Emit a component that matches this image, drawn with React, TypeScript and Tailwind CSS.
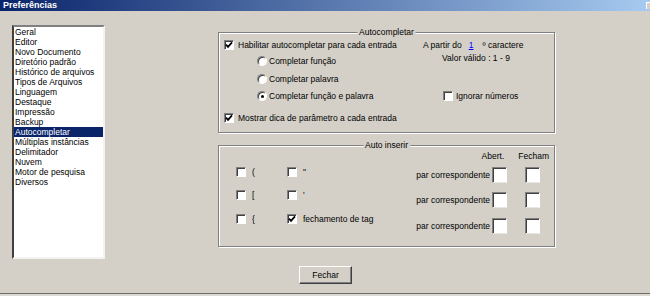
import type { ReactNode } from "react";

const items = [
  "Geral",
  "Editor",
  "Novo Documento",
  "Diretório padrão",
  "Histórico de arquivos",
  "Tipos de Arquivos",
  "Linguagem",
  "Destaque",
  "Impressão",
  "Backup",
  "Autocompletar",
  "Múltiplas instâncias",
  "Delimitador",
  "Nuvem",
  "Motor de pesquisa",
  "Diversos",
];

const Check = ({ checked = false }: { checked?: boolean }) => (
  <span className="w-[10px] h-[10px] shrink-0 bg-white border border-t-[#808080] border-l-[#808080] border-r-white border-b-white shadow-[inset_1px_1px_0_#404040] flex items-center justify-center">
    {checked && (
      <svg width="8" height="8" viewBox="0 0 8 8">
        <path d="M1 3.6 L3 5.8 L7 1.4" stroke="#000" strokeWidth="1.8" fill="none" />
      </svg>
    )}
  </span>
);

const Radio = ({ checked = false }: { checked?: boolean }) => (
  <span className="w-[10px] h-[10px] shrink-0 rounded-full bg-white border border-t-[#808080] border-l-[#808080] border-r-white border-b-white shadow-[inset_1px_1px_0_#404040] flex items-center justify-center">
    {checked && <span className="w-[3px] h-[3px] rounded-full bg-black" />}
  </span>
);

const Field = ({ className = "" }: { className?: string }) => (
  <span
    className={`w-[15px] h-[16px] bg-white border border-t-[#808080] border-l-[#808080] border-r-white border-b-[#e8e6e0] shadow-[inset_1px_1px_0_#404040] ${className}`}
  />
);

const GroupBox = ({
  title,
  className = "",
  children,
}: {
  title: string;
  className?: string;
  children: ReactNode;
}) => (
  <div
    className={`relative border border-[#808080] shadow-[inset_1px_1px_0_#fff,1px_1px_0_#fff] ${className}`}
  >
    <span className="absolute -top-[6px] left-1/2 -translate-x-1/2 bg-[#d4d0c8] px-[2px] leading-[10px]">
      {title}
    </span>
    {children}
  </div>
);

export default function App() {
  return (
    <div className="w-[650px] h-[296px] bg-[#d4d0c8] flex flex-col font-['Liberation_Sans',Arial,sans-serif] text-[8.5px] leading-[10px] text-black overflow-hidden">
      {/* title bar */}
      <div className="h-[11px] shrink-0 bg-[linear-gradient(to_right,#0a246a,#a6caf0)] flex items-center justify-between pl-[3px]">
        <span className="text-white font-bold text-[9px] leading-[11px]">Preferências</span>
        <span className="w-[4px] h-[7px] bg-[#d4d0c8] border-l border-t border-white" />
      </div>

      <div className="flex flex-1">
        {/* category list */}
        <div className="ml-[12px] mt-[14px] w-[93px] h-[234px] bg-white border-2 border-t-[#808080] border-l-[#404040] border-r-[#f4f3ef] border-b-[#f4f3ef] flex flex-col">
          {items.map((it) => (
            <div
              key={it}
              className={`h-[10px] pl-[1px] whitespace-nowrap ${
                it === "Autocompletar" ? "bg-[#0a246a] text-white" : ""
              }`}
            >
              {it}
            </div>
          ))}
        </div>

        {/* settings */}
        <div className="ml-[113px] w-[337px] mt-[21px] flex flex-col">
          <GroupBox title="Autocompletar" className="h-[101px] flex">
            <div className="w-[204px] flex flex-col pl-[5px] pt-[7px]">
              <div className="h-[10px] flex items-center gap-[4px]">
                <Check checked />
                <span>Habilitar autocompletar para cada entrada</span>
              </div>
              <div className="h-[10px] mt-[6px] pl-[33px] flex items-center gap-[2px]">
                <Radio />
                <span>Completar função</span>
              </div>
              <div className="h-[10px] mt-[8px] pl-[33px] flex items-center gap-[2px]">
                <Radio />
                <span>Completar palavra</span>
              </div>
              <div className="h-[10px] mt-[7px] pl-[33px] flex items-center gap-[2px]">
                <Radio checked />
                <span>Completar função e palavra</span>
              </div>
              <div className="h-[10px] mt-[12px] flex items-center gap-[4px]">
                <Check checked />
                <span>Mostrar dica de parâmetro a cada entrada</span>
              </div>
            </div>
            <div className="flex flex-col pt-[7px]">
              <div className="h-[10px] flex items-center whitespace-nowrap">
                <span>A partir do</span>
                <span className="ml-[7px] text-[#0000ff] underline">1</span>
                <span className="ml-[9px]">º caractere</span>
              </div>
              <div className="h-[10px] mt-[3px] pl-[19px] whitespace-nowrap">Valor válido : 1 - 9</div>
              <div className="h-[10px] mt-[28px] pl-[20px] flex items-center gap-[3px]">
                <Check />
                <span>Ignorar números</span>
              </div>
            </div>
          </GroupBox>

          <GroupBox title="Auto inserir" className="mt-[12px] h-[102px] flex justify-between">
            <div className="pl-[17px] pt-[21px] flex flex-col">
              {[
                ["(", '"', false],
                ["[", "'", false],
                ["{", "fechamento de tag", true],
              ].map(([a, b, c], i) => (
                <div
                  key={i}
                  className={`h-[10px] flex items-center ${i === 1 ? "mt-[13px]" : i === 2 ? "mt-[14px]" : ""}`}
                >
                  <div className="w-[51px] flex items-center gap-[6px]">
                    <Check />
                    <span>{a as string}</span>
                  </div>
                  <div className="flex items-center gap-[6px]">
                    <Check checked={c as boolean} />
                    <span>{b as string}</span>
                  </div>
                </div>
              ))}
            </div>
            <div className="pr-[14px] pt-[5px] flex flex-col items-end">
              <div className="h-[10px] flex items-center mr-[-9px]">
                <span>Abert.</span>
                <span className="ml-[14px]">Fecham</span>
              </div>
              {[0, 1, 2].map((i) => (
                <div
                  key={i}
                  className={`h-[16px] flex items-center ${i === 0 ? "mt-[6px]" : i === 1 ? "mt-[9px]" : "mt-[10px]"}`}
                >
                  <span>par correspondente</span>
                  <Field className="ml-[2px]" />
                  <Field className="ml-[18px]" />
                </div>
              ))}
            </div>
          </GroupBox>

          <button className="mt-[19px] ml-[81px] w-[53px] h-[18px] bg-[#d4d0c8] border border-t-white border-l-white border-r-[#404040] border-b-[#404040] shadow-[inset_-1px_-1px_0_#808080] flex items-center justify-center">
            Fechar
          </button>
        </div>
      </div>

      <div className="h-[3px] shrink-0 border-t border-[#6e6c68] bg-[#dcd9d2]" />
    </div>
  );
}
